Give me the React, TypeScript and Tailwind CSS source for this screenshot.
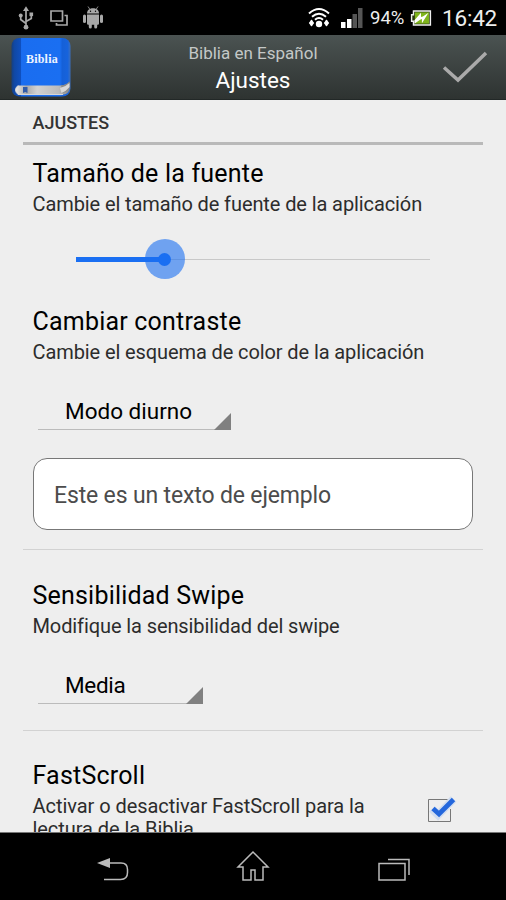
import React, { useState } from 'react';

function StatusBar() {
  return (
    <div className="flex h-[35px] shrink-0 items-center bg-black">
      {/* Notifications */}
      <svg className="ml-[18px] h-6 w-4 shrink-0" viewBox="0 0 16 24" fill="none" stroke="#a8a8a8" strokeWidth="1.7">
        <path d="M8 4v17M2.7 10v3.5L8 17.500M13.300 8.500v4L8 15.500" />
        <path d="M8 .3l3 4.700H5z" fill="#a8a8a8" stroke="none" />
        <circle cx="8" cy="21.200" r="2.400" fill="#a8a8a8" stroke="none" />
        <circle cx="2.700" cy="9.500" r="2" fill="#a8a8a8" stroke="none" />
        <path d="M11.500 6.500h3.600v3.600h-3.600z" fill="#a8a8a8" stroke="none" />
      </svg>
      <svg className="ml-4 h-4 w-[18px] shrink-0" viewBox="0 0 18 16" fill="none" stroke="#a8a8a8" strokeWidth="1.700">
        <path d="M1 1h11.500v10H1zM14.500 5.500H17V15H6.500v-2" />
      </svg>
      <svg className="ml-[15px] h-[23px] w-5 shrink-0" viewBox="0 0 20 23" fill="#a8a8a8">
        <path d="M4 7.500C4 4.500 6 2.200 10 2.200s6 2.300 6 5.300zM4 8.500h12v9q0 1.200-1.200 1.200H5.200Q4 18.700 4 17.500z" />
        <rect x="0" y="8.500" width="3" height="8.500" rx="1.500" />
        <rect x="17" y="8.500" width="3" height="8.500" rx="1.500" />
        <rect x="5.800" y="16" width="3" height="6.500" rx="1.500" />
        <rect x="11.200" y="16" width="3" height="6.500" rx="1.500" />
        <path d="M5 .5l2 3M15 .5l-2 3" stroke="#a8a8a8" strokeWidth=".8" />
        <circle cx="7.500" cy="5.200" r=".7" fill="#000" />
        <circle cx="12.500" cy="5.200" r=".7" fill="#000" />
      </svg>

      {/* System */}
      <svg className="ml-[205px] h-[21px] w-[22px] shrink-0" viewBox="0 0 22 21" fill="none" stroke="#fff" strokeWidth="2">
        <path d="M1 6.500q10-9 20 0M4 9.700q7-6 14 0M7 12.800q4-3.500 8 0" />
        <circle cx="11" cy="17" r="3.200" fill="#fff" stroke="none" />
        <path d="M3.500 13v6M18.500 13v6" strokeWidth="1.400" />
        <path d="M.8 16h5.400l-2.700 3.500zM.8 16h5.400l-2.700-3.500zM15.800 16h5.400l-2.700 3.500zM15.800 16h5.400l-2.700-3.500z" fill="#fff" stroke="none" />
      </svg>
      <svg className="ml-[11px] h-5 w-[22px] shrink-0" viewBox="0 0 22 20">
        <path d="M0 14h4.500v6H0zM6 11h4.500v9H6z" fill="#fff" />
        <path d="M11.500 6H16v14h-4.500zM17 0h4.500v20H17z" fill="#555" />
      </svg>
      <span className="ml-[7px] w-[36px] whitespace-nowrap pt-[2px] text-[18.5px] leading-none text-[#eee]">94%</span>
      <svg className="ml-[4px] h-4 w-[22px] shrink-0" viewBox="0 0 22 17">
        <path d="M3 1h18v15H3V12H1V5h2z" fill="#2b3a10" stroke="#eee" strokeWidth="1.500" />
        <path d="M4.500 2.500h15v12h-15z" fill="#7fb41c" />
        <path d="M4 11l7-8v4.500l2-.5 6-4-7 11V9.500l-2 .8-6 4.200z" fill="#fff" />
      </svg>
      <span className="ml-[10px] whitespace-nowrap pt-px text-[22.5px] leading-none tracking-[-0.2px] text-[#eee]">16:42</span>
    </div>
  );
}

function BibleIcon() {
  return (
    <div className="relative h-[60px] w-[60px] shrink-0">
      <svg className="h-full w-full" viewBox="0 0 60 60">
        <defs>
          <linearGradient id="cover" x1="0" x2="1" y1="0" y2="0">
            <stop offset="0" stopColor="#173f7c" />
            <stop offset=".05" stopColor="#1048a5" />
            <stop offset=".16" stopColor="#0f50c0" />
            <stop offset=".17" stopColor="#1a6df0" />
            <stop offset=".82" stopColor="#1a6ff2" />
            <stop offset=".86" stopColor="#1560d8" />
            <stop offset=".95" stopColor="#1763dc" />
            <stop offset="1" stopColor="#3a6fc0" />
          </linearGradient>
          <linearGradient id="pages" x1="0" x2="1" y1="0" y2="0">
            <stop offset="0" stopColor="#eee" />
            <stop offset=".2" stopColor="#aaa" />
            <stop offset=".4" stopColor="#d2d2d2" />
            <stop offset=".8" stopColor="#bbb" />
            <stop offset="1" stopColor="#888" />
          </linearGradient>
        </defs>
        <rect x=".5" y="1" width="59" height="58.500" rx="8" fill="url(#cover)" />
        <path d="M7 48.500h42q6 0 9.500-4V52q-1 5-6 5.500H7q-5-4.500 0-9z" fill="url(#pages)" />
        <path d="M50 48.300q6-.3 8.500-3.800V51q-2 4-7 5z" fill="#8a8a8a" />
        <path d="M49 51q6-1.500 9.500-5v4q-3 4-8 6z" fill="#d8d8d8" />
        <path d="M7 48.500q-5 4.500 0 9h45" fill="none" stroke="#d8d8d8" />
        <path d="M12 50h4.500v6l-2.200-1-2.300 1z" fill="#315caa" />
      </svg>
      <span className="absolute left-[15px] top-[16px] font-['Liberation_Serif',serif] text-[12px] font-bold leading-none tracking-[0.2px] text-[#eef4ff]">Biblia</span>
    </div>
  );
}

function Header() {
  return (
    <header className="flex h-[65px] shrink-0 items-start justify-between border-b border-[#222827] bg-linear-to-b from-[#4b5352] to-[#2e3331] pl-[11px] pr-[18px] pt-[2px]">
      <BibleIcon />
      <div className="-ml-[7px] pt-[6px] text-center">
        <div className="text-[17px] leading-5 text-[#c4c8c7]">Biblia en Español</div>
        <div className="mt-[4px] text-[22.5px] leading-[26px] text-white">Ajustes</div>
      </div>
      <svg className="mt-[14px] h-8 w-[46px]" viewBox="0 0 46 32" fill="none" stroke="#aaa" strokeWidth="3.500">
        <path d="M2 16.500l14 12.500L44 2" />
      </svg>
    </header>
  );
}

function SettingTitle({ title, text }: { title: string; text: string }) {
  return (
    <div className="pl-[9.5px] pt-px">
      <h2 className="text-[25px] leading-[30px] tracking-[0.2px] text-black">{title}</h2>
      <p className="mt-[3px] text-[20px] leading-[24px] tracking-[-0.1px] text-[#2c2c2c]">{text}</p>
    </div>
  );
}

function Spinner({ value, className }: { value: string; className: string }) {
  return (
    <button className={`relative block h-[34px] border-b border-[#bbb] pb-[4px] pl-[27px] text-left text-[22.5px] leading-[28px] text-black ${className}`}>
      {value}
      <svg className="absolute -bottom-px right-0 h-[17px] w-[17px]" viewBox="0 0 17 17">
        <path d="M17 0v17H0z" fill="#808080" />
      </svg>
    </button>
  );
}

function NavBar() {
  return (
    <nav className="relative z-10 flex h-[68px] shrink-0 items-start border-t border-[#777] bg-black">
      <svg className="ml-[97px] mt-6 h-6 w-8" viewBox="0 0 32 24" fill="none" stroke="#bbb" strokeWidth="1.500">
        <path d="M12 6h12q6.500 0 6.500 6.500v3q0 7-7 7H7" />
        <path d="M0 6l13-5v10z" fill="#bbb" stroke="none" />
      </svg>
      <svg className="ml-[107px] mt-[17px] h-[32px] w-[34px]" viewBox="0 0 34 32" fill="none" stroke="#bbb" strokeWidth="1.500">
        <path d="M17 2L2 17h5v13h8V20h4v10h8V17h5z" />
      </svg>
      <svg className="ml-[108px] mt-[25px] h-[23px] w-8" viewBox="0 0 32 23" fill="none" stroke="#bbb" strokeWidth="1.500">
        <path d="M1 5.500h26V22H1zM10 1.500h21V17" />
      </svg>
    </nav>
  );
}

export default function App() {
  const [fastScroll, setFastScroll] = useState(true);
  const fontSize = 25;

  return (
    <div className="flex h-[900px] w-[506px] flex-col overflow-hidden bg-[#eee] font-['Roboto',sans-serif]">
      <StatusBar />
      <Header />

      <main className="min-h-0 flex-1 overflow-hidden pl-[23px] pr-[23px]">
        <h1 className="h-[45px] border-b-[3px] border-[#b9b9b9] pl-[9.5px] pt-[11px] text-[18px] font-medium leading-6 text-[#333]">AJUSTES</h1>

        <section className="pt-[13px]">
          <SettingTitle title="Tamaño de la fuente" text="Cambie el tamaño de fuente de la aplicación" />
          {/* Font size slider */}
          <div className="relative ml-[53px] mt-[23px] flex h-10 w-[354px] items-center">
            <div className="h-px w-full bg-[#c8c8c8]" />
            <div className="absolute left-0 h-[5px] bg-[#1a6ff2]" style={{ width: `${fontSize}%` }} />
            <div className="absolute flex h-10 w-10 -translate-x-1/2 items-center justify-center rounded-full bg-[#1a6ff2]/60" style={{ left: `${fontSize}%` }}>
              <div className="h-[13px] w-[13px] rounded-full bg-[#1a6ff2]" />
            </div>
          </div>
        </section>

        <section className="border-b border-[#d2d2d2] pb-[19px] pt-[27px]">
          <SettingTitle title="Cambiar contraste" text="Cambie el esquema de color de la aplicación" />
          <Spinner value="Modo diurno" className="ml-[15px] mt-[32px] w-[193px]" />
          <div className="ml-[10px] mt-[28px] flex h-[72px] w-[440px] items-center rounded-[14px] border border-[#777] bg-white pl-5 pt-[5px] text-[23px] tracking-[-0.15px] text-[#4c4c4c]">
            Este es un texto de ejemplo
          </div>
        </section>

        <section className="border-b border-[#d2d2d2] pb-[26px] pt-[30px]">
          <SettingTitle title="Sensibilidad Swipe" text="Modifique la sensibilidad del swipe" />
          <Spinner value="Media" className="ml-[15px] mt-[32px] w-[165px] tracking-[-0.3px]" />
        </section>

        <section className="flex pt-[30px]">
          <div className="w-[360px] pl-[9.5px]">
            <h2 className="text-[25px] leading-[30px] tracking-[0.2px] text-black">FastScroll</h2>
            <p className="mt-[4px] text-[20px] leading-[23px] tracking-[-0.05px] text-[#2c2c2c]">Activar o desactivar FastScroll para la lectura de la Biblia.</p>
          </div>
          <button role="checkbox" aria-checked={fastScroll} onClick={() => setFastScroll(!fastScroll)} className="ml-[42px] mt-[33px] h-[32px] w-[34px]">
            <svg className="h-full w-full" viewBox="0 0 34 32" fill="none">
              <path d="M25.500 15v12.500h-22v-22h19" stroke="#777" />
              {fastScroll && (
                <>
                  <path d="M7 15l6 6L28.500 5" stroke="#8db6f5" strokeWidth="8" opacity=".3" />
                  <path d="M8 14.500l6 5.500L28.500 5.500" stroke="#2467dc" strokeWidth="4.800" />
                </>
              )}
            </svg>
          </button>
        </section>
      </main>

      <NavBar />
    </div>
  );
}
